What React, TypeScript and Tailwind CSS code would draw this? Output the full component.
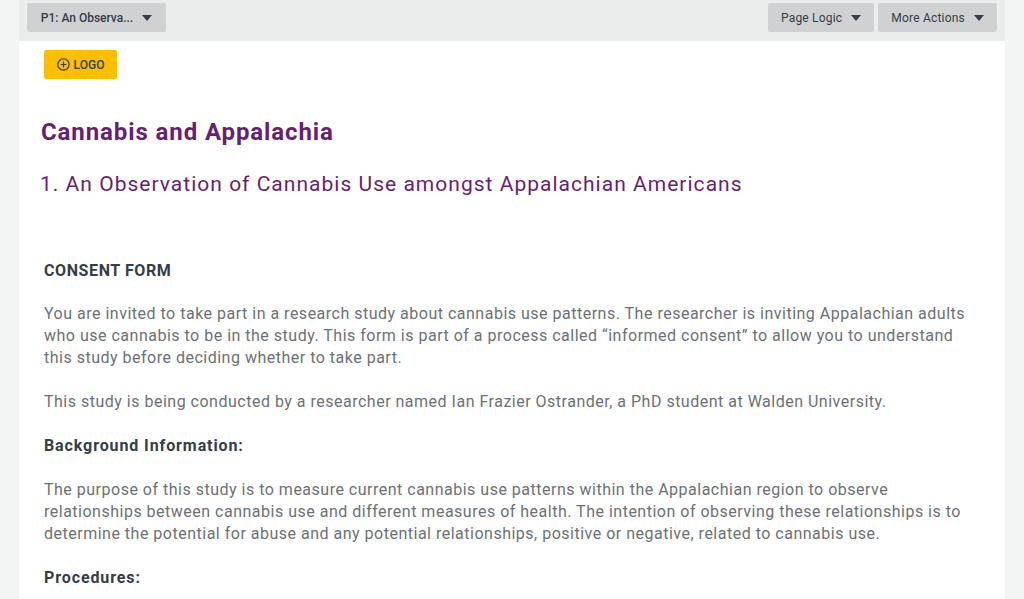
function Caret() {
  return (
    <svg width="10" height="6" viewBox="0 0 10 6" className="ml-[9px]">
      <path d="M0 0h10L5 6z" fill="#333e48" />
    </svg>
  );
}

function BarButton({ label }: { label: string }) {
  return (
    <button className="flex h-[29px] items-center rounded-[2px] bg-[#d0d1d3] px-[13px] text-[12px] tracking-[0.2px] text-[#333e48]">
      {label}
      <Caret />
    </button>
  );
}

export default function App() {
  return (
    <div
      className="flex min-h-[599px] bg-[#f3f4f4] px-[19px]"
      style={{ fontFamily: "Roboto, 'Liberation Sans', sans-serif" }}
    >
      <div className="flex w-[986px] flex-col">
        <div className="flex h-[41px] items-start justify-between bg-[#ebecec] pl-[8px] pr-[8px] pt-[3px]">
          <button className="flex h-[29px] w-[139px] items-center justify-center rounded-[2px] bg-[#d0d1d3] text-[12px] font-medium text-[#333e48]">
            P1: An Observa...
            <Caret />
          </button>
          <div className="flex gap-[4px]">
            <BarButton label="Page Logic" />
            <BarButton label="More Actions" />
          </div>
        </div>
        <div className="flex-1 bg-white px-[25px] pt-[9px]">
          <button className="flex h-[29px] w-[73px] items-center justify-center gap-[4px] rounded-[2px] bg-[#fbbf00] text-[12px] font-medium text-[#333e48]">
            <svg width="13" height="13" viewBox="0 0 12 12">
              <circle cx="6" cy="6" r="5.2" fill="none" stroke="#333e48" strokeWidth="1.1" />
              <path d="M6 3.3v5.4M3.3 6h5.4" stroke="#333e48" strokeWidth="1.1" />
            </svg>
            LOGO
          </button>
          <h1 className="-ml-[3px] mt-[39px] text-[24px] font-bold leading-[28px] tracking-[0.9px] text-[#671e75]">
            Cannabis and Appalachia
          </h1>
          <h2 className="-ml-[4px] mt-[24px] text-[21px] font-normal leading-[28px] tracking-[1.02px] text-[#671e75]">
            1. An Observation of Cannabis Use amongst Appalachian Americans
          </h2>
          <div className="mt-[62px] text-[16px] leading-[22px] tracking-[0.5px] text-[#6b7176]">
            <p className="font-bold tracking-[0.6px] text-[#333e48]">CONSENT FORM</p>
            <p className="mt-[21px]">
              You are invited to take part in a research study about cannabis use patterns. The researcher is inviting Appalachian adults
              <br />
              who use cannabis to be in the study. This form is part of a process called “informed consent” to allow you to understand
              <br />
              this study before deciding whether to take part.
            </p>
            <p className="mt-[22px]">
              This study is being conducted by a researcher named Ian Frazier Ostrander, a PhD student at Walden University.
            </p>
            <p className="mt-[22px] font-bold tracking-[0.9px] text-[#333e48]">Background Information:</p>
            <p className="mt-[22px]">
              The purpose of this study is to measure current cannabis use patterns within the Appalachian region to observe
              <br />
              relationships between cannabis use and different measures of health. The intention of observing these relationships is to
              <br />
              determine the potential for abuse and any potential relationships, positive or negative, related to cannabis use.
            </p>
            <p className="mt-[22px] font-bold tracking-[0.9px] text-[#333e48]">Procedures:</p>
          </div>
        </div>
      </div>
    </div>
  );
}
